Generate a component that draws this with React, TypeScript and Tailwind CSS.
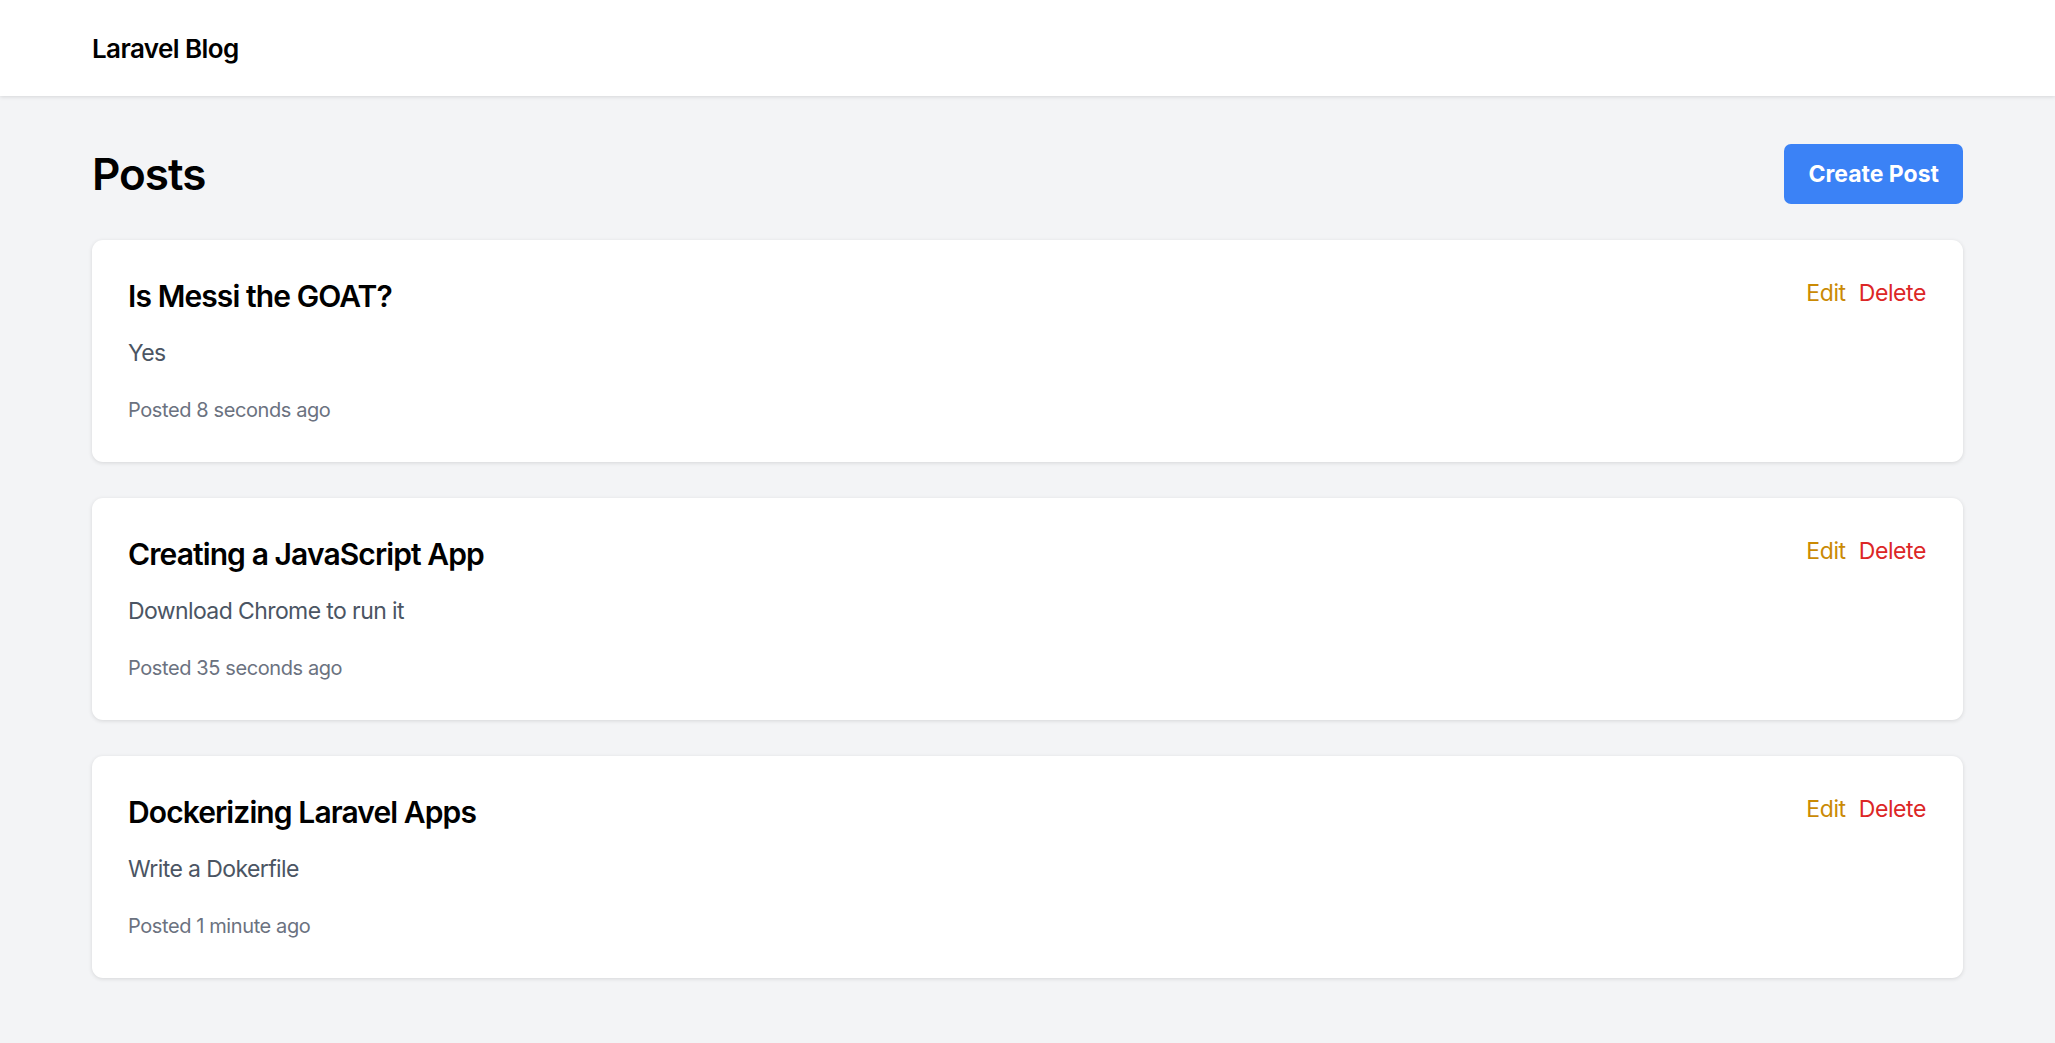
const posts = [
  { id: 1, title: "Is Messi the GOAT?", body: "Yes", posted: "Posted 8 seconds ago" },
  { id: 2, title: "Creating a JavaScript App", body: "Download Chrome to run it", posted: "Posted 35 seconds ago" },
  { id: 3, title: "Dockerizing Laravel Apps", body: "Write a Dokerfile", posted: "Posted 1 minute ago" },
];

function PostCard({ title, body, posted }: { title: string; body: string; posted: string }) {
  return (
    <div className="bg-white rounded-[11px] shadow-[0_1px_4px_rgba(0,0,0,0.12)] pt-[36px] pl-[36px] pr-[37px] pb-[38px]">
      <div className="flex justify-between items-start">
        <h2 className="text-[30px] leading-[40px] font-semibold text-black tracking-[-0.9px]">{title}</h2>
        <div className="flex gap-[13px] text-[23px] leading-[32px] pt-px tracking-[-0.4px]">
          <a href="#" className="text-[#ca8a04]">Edit</a>
          <a href="#" className="text-[#dc2626]">Delete</a>
        </div>
      </div>
      <p className="mt-[21px] text-[23px] leading-[32px] text-[#4b5563] tracking-[-0.6px]">{body}</p>
      <p className="mt-[27px] text-[20px] leading-[28px] text-[#6b7280] tracking-[-0.4px]">{posted}</p>
    </div>
  );
}

export default function App() {
  return (
    <div className="min-h-screen bg-[#f3f4f6] font-['Inter',sans-serif]">
      <header className="bg-white h-[96px] flex items-center px-[92px] shadow-[0_1px_4px_rgba(0,0,0,0.12)]">
        <a href="#" className="text-[26px] font-semibold text-black tracking-[-0.6px]">Laravel Blog</a>
      </header>
      <main className="px-[92px] pt-[45px] pb-[60px]">
        <div className="flex justify-between items-center">
          <h1 className="text-[44px] font-semibold text-black tracking-[-1px]">Posts</h1>
          <button className="h-[60px] px-[24px] bg-[#3b82f6] text-white text-[23px] font-bold rounded-[7px]">
            Create Post
          </button>
        </div>
        <div className="mt-[33px] flex flex-col gap-[36px]">
          {posts.map((p) => (
            <PostCard key={p.id} title={p.title} body={p.body} posted={p.posted} />
          ))}
        </div>
      </main>
    </div>
  );
}
